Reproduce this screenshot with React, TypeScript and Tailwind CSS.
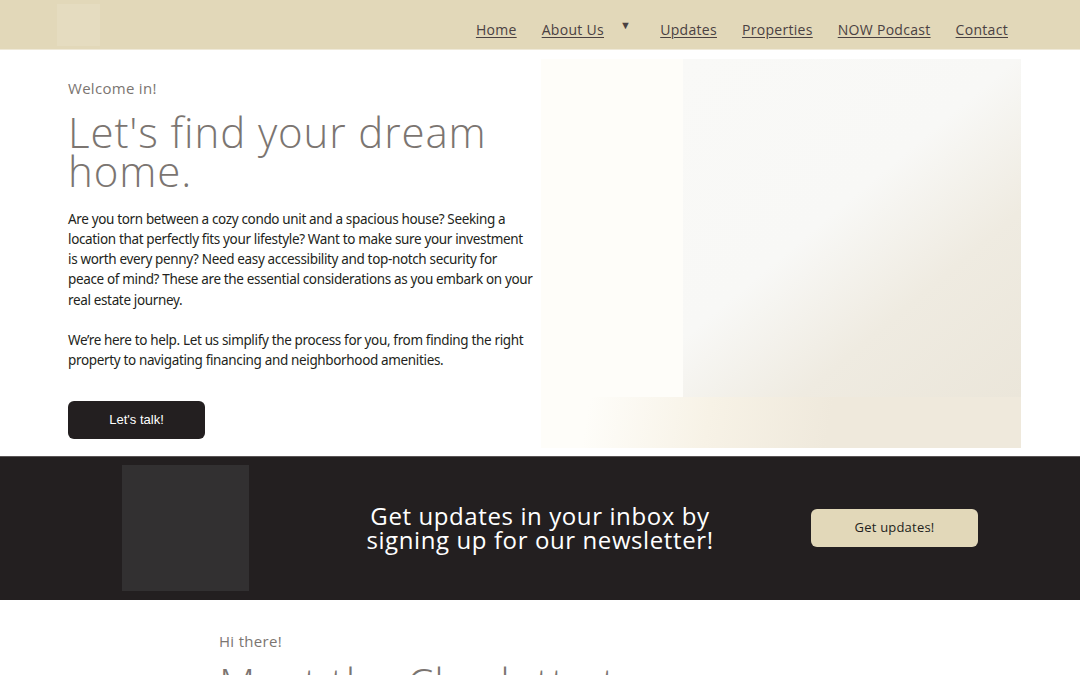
import React from "react";

const navLinks = ["Home", "About Us", "Updates", "Properties", "NOW Podcast", "Contact"];

const display = "font-['Open_Sans',sans-serif]";
const body = "font-['Noto_Sans',sans-serif]";

function Navbar() {
  return (
    <header className="h-[50px] bg-[#e2d8b9] border-b border-[#efe9d8] flex items-center justify-between pl-[57px] pr-[72px]">
      <div className="w-[43px] h-[42px] bg-[#e5dcc0]" />
      <nav className={`flex items-center gap-[25px] pt-[9px] text-[14px] tracking-[0.3px] text-[#4a4142] ${display}`}>
        {navLinks.map((link) => (
          <div key={link} className="flex items-center">
            <a href="#" className="underline underline-offset-2">
              {link}
            </a>
            {link === "About Us" ? (
              <span className="ml-[16px] mr-[4px] -mt-[8px] text-[11px] text-[#4a4142]">▼</span>
            ) : null}
          </div>
        ))}
      </nav>
    </header>
  );
}

function Hero() {
  return (
    <section className="flex pl-[68px] pt-[9px] pb-[8px]">
      <div className="w-[473px] pt-[18px] pr-[8px]">
        <p className={`text-[15px] tracking-[0.3px] text-[#7b7571] ${display}`}>Welcome in!</p>
        <h1 className={`mt-[12px] text-[42px] leading-[39px] tracking-[0.9px] font-light text-[#7b7571] ${display}`}>
          Let's find your dream home.
        </h1>
        <div className={`mt-[19px] text-[13.5px] leading-[20.3px] tracking-[-0.35px] text-[#231f20] ${body}`}>
          <p>
            Are you torn between a cozy condo unit and a spacious house? Seeking a location that perfectly
            fits your lifestyle? Want to make sure your investment is worth every penny? Need easy
            accessibility and top-notch security for peace of mind? These are the essential considerations
            as you embark on your real estate journey.
          </p>
          <p className="mt-[20px]">
            We’re here to help. Let us simplify the process for you, from finding the right property to
            navigating financing and neighborhood amenities.
          </p>
        </div>
        <button className="mt-[30px] w-[137px] h-[38px] rounded-[6px] bg-[#231f20] text-white text-[13px] font-['Liberation_Sans',sans-serif]">
          Let's talk!
        </button>
      </div>
      <div className="w-[480px] h-[389px] bg-[#fefdf9] flex flex-col">
        <div className="flex flex-1">
          <div className="w-[142px]" />
          <div className="flex-1 bg-[linear-gradient(140deg,#f9f9f7_0%,#f8f8f6_45%,#efebe1_70%,#ebe6da_100%)]" />
        </div>
        <div className="h-[51px] bg-[linear-gradient(100deg,#fefdf9_10%,#f7f2e6_35%,#efe9dc_60%,#efe9dc_100%)]" />
      </div>
    </section>
  );
}

function Newsletter() {
  return (
    <section className="h-[144px] bg-[#231f20] border-t border-[#5a5556] flex items-center pl-[122px] pr-[102px]">
      <div className="w-[127px] h-[126px] -mt-[2px] bg-[#323031]" />
      <p className={`flex-1 pl-[20px] -mt-[2px] text-center text-white text-[24px] leading-[24px] tracking-[0.6px] ${display}`}>
        Get updates in your inbox by
        <br />
        signing up for our newsletter!
      </p>
      <button className={`w-[167px] h-[38px] -mt-[2px] rounded-[6px] bg-[#e2d8b9] text-[#231f20] text-[13px] tracking-[0.2px] ${display}`}>
        Get updates!
      </button>
    </section>
  );
}

function About() {
  return (
    <section className="pl-[219px] pt-[30px]">
      <p className={`text-[15px] tracking-[0.3px] text-[#7b7571] ${display}`}>Hi there!</p>
      <h2 className={`mt-[10px] text-[42px] leading-[39px] tracking-[0.9px] font-light text-[#7b7571] ${display}`}>
        Meet the Charlotte team
      </h2>
    </section>
  );
}

export default function App() {
  return (
    <div className="bg-white min-h-screen overflow-hidden">
      <Navbar />
      <Hero />
      <Newsletter />
      <About />
    </div>
  );
}
